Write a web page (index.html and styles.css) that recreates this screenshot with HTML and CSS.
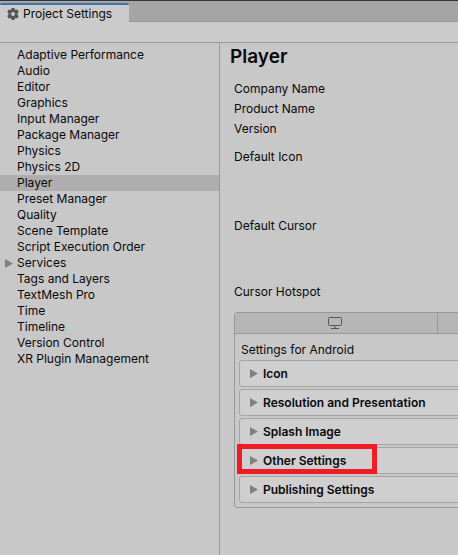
FILE: index.html
```html
<!DOCTYPE html>
<html lang="en">
<head>
<meta charset="utf-8">
<title>Project Settings</title>
<link rel="stylesheet" href="styles.css">
</head>
<body>
<div class="window">
  <header class="tabstrip">
    <div class="tab">
      <svg class="gear" viewBox="0 0 12 12" aria-hidden="true">
        <path fill-rule="evenodd" d="M4.600 0h2.800l.4 1.500 1 .6 1.600-.5 1.400 2.400-1.200 1.100v1.800l1.200 1.100-1.400 2.400-1.600-.5-1 .6-.4 1.500H4.600l-.4-1.500-1-.6-1.600.5L.2 8l1.200-1.100V5.100L.2 4l1.400-2.400 1.600.5 1-.6zM6 4a2 2 0 1 0 0 4 2 2 0 0 0 0-4z"/>
      </svg>
      <span>Project Settings</span>
    </div>
  </header>
  <div class="toolbar"></div>
  <div class="content">
    <nav class="sidebar">
      <ul class="categories">
        <li><a href="#">Adaptive Performance</a></li>
        <li><a href="#">Audio</a></li>
        <li><a href="#">Editor</a></li>
        <li><a href="#">Graphics</a></li>
        <li><a href="#">Input Manager</a></li>
        <li><a href="#">Package Manager</a></li>
        <li><a href="#">Physics</a></li>
        <li><a href="#">Physics 2D</a></li>
        <li><a class="selected" href="#" aria-current="page">Player</a></li>
        <li><a href="#">Preset Manager</a></li>
        <li><a href="#">Quality</a></li>
        <li><a href="#">Scene Template</a></li>
        <li><a href="#">Script Execution Order</a></li>
        <li><a class="parent" href="#"><svg class="arrow" viewBox="0 0 8 9" aria-hidden="true"><path d="M0 0l8 4.500-8 4.500z"/></svg>Services</a></li>
        <li><a href="#">Tags and Layers</a></li>
        <li><a href="#">TextMesh Pro</a></li>
        <li><a href="#">Time</a></li>
        <li><a href="#">Timeline</a></li>
        <li><a href="#">Version Control</a></li>
        <li><a href="#">XR Plugin Management</a></li>
      </ul>
    </nav>
    <main class="player">
      <h1>Player</h1>
      <div class="fields">
        <div class="field">Company Name</div>
        <div class="field">Product Name</div>
        <div class="field">Version</div>
        <div class="field picture">Default Icon</div>
        <div class="field picture">Default Cursor</div>
        <div class="field">Cursor Hotspot</div>
      </div>
      <section class="platform">
        <div class="platform-tabs">
          <button type="button" aria-label="Standalone">
            <svg class="monitor" viewBox="0 0 14 12" aria-hidden="true">
              <rect x=".5" y=".5" width="13" height="8" rx="1"/>
              <path d="M7 9v2M3 11.500h8"/>
            </svg>
          </button>
          <button type="button" aria-label="Android"></button>
        </div>
        <div class="platform-body">
          <h2>Settings for Android</h2>
          <button class="foldout" type="button"><svg class="arrow" viewBox="0 0 8 9" aria-hidden="true"><path d="M0 0l8 4.500-8 4.500z"/></svg>Icon</button>
          <button class="foldout" type="button"><svg class="arrow" viewBox="0 0 8 9" aria-hidden="true"><path d="M0 0l8 4.500-8 4.500z"/></svg>Resolution and Presentation</button>
          <button class="foldout" type="button"><svg class="arrow" viewBox="0 0 8 9" aria-hidden="true"><path d="M0 0l8 4.500-8 4.500z"/></svg>Splash Image</button>
          <div class="marked">
            <button class="foldout" type="button"><svg class="arrow" viewBox="0 0 8 9" aria-hidden="true"><path d="M0 0l8 4.500-8 4.500z"/></svg>Other Settings</button>
            <span class="marker"></span>
          </div>
          <button class="foldout" type="button"><svg class="arrow" viewBox="0 0 8 9" aria-hidden="true"><path d="M0 0l8 4.500-8 4.500z"/></svg>Publishing Settings</button>
        </div>
      </section>
    </main>
  </div>
</div>
</body>
</html>
```

FILE: styles.css
```css
* {
  box-sizing: border-box;
}

body {
  margin: 0;
  background: #c8c8c8;
  color: #090909;
  font: 12px/16px Inter, "Liberation Sans", sans-serif;
}

button {
  font: inherit;
  color: inherit;
}

.window {
  display: flex;
  flex-direction: column;
  min-height: 100vh;
  overflow: hidden;
  border-top: 1px solid #383435;
}

.tabstrip {
  display: flex;
  height: 21px;
  padding-top: 2px;
  background: #a5a5a5;
  box-shadow: inset 0 -1px #999;
}

.tab {
  display: flex;
  align-items: center;
  gap: 4px;
  padding: 0 17px 0 7px;
  border-top: 2px solid #3a72b0;
  border-radius: 2px 2px 0 0;
  background: #cbcbcb;
}

.gear {
  width: 12px;
  height: 12px;
  fill: #555;
}

.toolbar {
  height: 21px;
  border-bottom: 1px solid #999;
  background: #cbcbcb;
}

.content {
  display: flex;
  flex: 1;
}

.sidebar {
  flex: none;
  width: 220px;
  padding-top: 4px;
  border-right: 1px solid #999;
}

.categories {
  margin: 0;
  padding: 0;
  list-style: none;
}

.categories a {
  display: flex;
  align-items: center;
  height: 16px;
  padding-left: 17px;
  color: inherit;
  text-decoration: none;
}

.categories .selected {
  background: #aeaeae;
}

.categories .parent {
  gap: 4px;
  padding-left: 5px;
}

.arrow {
  flex: none;
  width: 8px;
  height: 9px;
  fill: #808080;
}

.player {
  flex: 1;
  min-width: 0;
  padding: 2px 0 0 10px;
}

h1 {
  margin: 0;
  font-size: 19px;
  font-weight: 600;
  line-height: 24px;
}

.fields {
  display: flex;
  flex-direction: column;
  gap: 4px;
  padding: 12px 0 0 4px;
}

.picture {
  height: 62px;
  margin-top: 8px;
  flex: none;
}

.picture + .picture {
  margin-top: 3px;
}

.platform {
  width: 606px;
  margin: 12px 0 0 4px;
  border: 1px solid #999;
  border-radius: 3px;
}

.platform-tabs {
  display: flex;
  border-bottom: 1px solid #999;
}

.platform-tabs button {
  display: flex;
  flex: 1;
  align-items: center;
  justify-content: center;
  height: 20px;
  padding: 0 2px 0 0;
  border: 0;
  background: #b6b6b6;
}

.platform-tabs button + button {
  flex: 2;
  border-left: 1px solid #999;
}

.monitor {
  width: 14px;
  height: 12px;
  fill: none;
  stroke: #555;
}

.platform-body {
  display: flex;
  flex-direction: column;
  gap: 2px;
  padding: 8px 4px 4px;
}

h2 {
  margin: 0 2px;
  font-size: 12px;
  font-weight: 400;
}

.foldout {
  display: flex;
  align-items: center;
  gap: 5px;
  width: 100%;
  height: 27px;
  padding: 0 10px;
  border: 1px solid #a5a5a5;
  border-radius: 3px;
  background: #cfcfcf;
  font-weight: 600;
}

.marked {
  position: relative;
}

.marker {
  position: absolute;
  top: -3px;
  left: -2px;
  width: 140px;
  height: 30px;
  border: 5px solid #ee1c25;
  pointer-events: none;
}
```
